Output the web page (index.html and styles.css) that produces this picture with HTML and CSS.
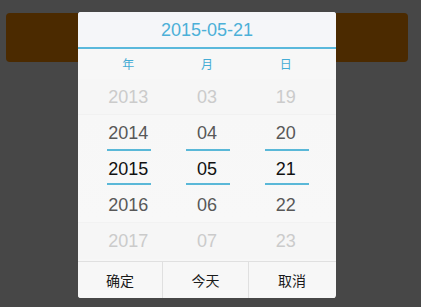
FILE: index.html
```html
<!DOCTYPE html>
<html lang="zh">
<head>
<meta charset="utf-8">
<title>日期选择</title>
<link rel="stylesheet" href="styles.css">
</head>
<body>
<div class="page">
  <div class="bar"></div>
</div>
<div class="dialog">
  <div class="header">2015-05-21</div>
  <div class="labels">
    <span>年</span><span>月</span><span>日</span>
  </div>
  <div class="wheel">
    <div class="col">
      <div class="item far">2013</div>
      <div class="item near">2014</div>
      <div class="item sel">2015</div>
      <div class="item near">2016</div>
      <div class="item far">2017</div>
    </div>
    <div class="col">
      <div class="item far">03</div>
      <div class="item near">04</div>
      <div class="item sel">05</div>
      <div class="item near">06</div>
      <div class="item far">07</div>
    </div>
    <div class="col">
      <div class="item far">19</div>
      <div class="item near">20</div>
      <div class="item sel">21</div>
      <div class="item near">22</div>
      <div class="item far">23</div>
    </div>
  </div>
  <div class="footer">
    <button class="btn b1">确定</button>
    <button class="btn b2">今天</button>
    <button class="btn b3">取消</button>
  </div>
</div>
</body>
</html>
```
FILE: styles.css
```css
html, body {
  margin: 0;
  padding: 0;
}
body {
  width: 421px;
  height: 307px;
  background: #474747;
  font-family: "Liberation Sans", Arial, "Noto Sans CJK SC", sans-serif;
  overflow: hidden;
  position: relative;
}
.page {
  padding: 13px 13px 0 6px;
}
.bar {
  height: 49px;
  background: #4b2a00;
  border-radius: 4px;
}
.dialog {
  position: absolute;
  left: 78px;
  top: 12px;
  width: 258px;
  height: 286px;
  background: #f7f7f7;
  border-radius: 3px;
  overflow: hidden;
  display: flex;
  flex-direction: column;
}
.header {
  height: 35px;
  line-height: 37px;
  text-align: center;
  font-size: 18px;
  color: #4cb0d8;
  background: #f5f6f9;
  border-bottom: 2px solid #5ab8dc;
}
.labels {
  display: grid;
  grid-template-columns: repeat(3, 1fr);
  padding: 0 11px;
  height: 30px;
  line-height: 30px;
  text-align: center;
  font-size: 12px;
  color: #45acd5;
  font-family: "Noto Sans CJK SC", sans-serif;
}
.wheel {
  display: grid;
  grid-template-columns: repeat(3, 1fr);
  padding: 0 11px;
  height: 180px;
  background: linear-gradient(#f6f6f6 0, #f6f6f6 35px, #f1f1f1 35px, #f1f1f1 36px, #f7f7f7 36px, #f8f8f8 143px, #f2f2f2 143px, #f2f2f2 144px, #f6f6f6 144px);
}
.col {
  display: flex;
  flex-direction: column;
}
.item {
  height: 36px;
  line-height: 37px;
  text-align: center;
  font-size: 18px;
  position: relative;
}
.far {
  color: #cbcbcb;
}
.near {
  color: #585858;
}
.sel {
  color: #111;
}
.sel::before,
.sel::after {
  content: "";
  position: absolute;
  left: 50%;
  width: 44px;
  margin-left: -21px;
  height: 2px;
  background: #5ab8d8;
}
.sel::before {
  top: -2px;
}
.sel::after {
  top: 32px;
}
.footer {
  margin-top: 2px;
  flex: 1;
  display: flex;
  border-top: 1px solid #e0e0e0;
}
.btn {
  flex: none;
  border: 0;
  margin: 0;
  padding: 0;
  background: #f7f7f7;
  font-family: "Noto Sans CJK SC", sans-serif;
  font-size: 14px;
  color: #1a1a1a;
  line-height: 36px;
}
.b1 {
  width: 85px;
  border-right: 1px solid #e0e0e0;
}
.b2 {
  width: 86px;
  border-right: 1px solid #e0e0e0;
}
.b3 {
  width: 86px;
}
```
